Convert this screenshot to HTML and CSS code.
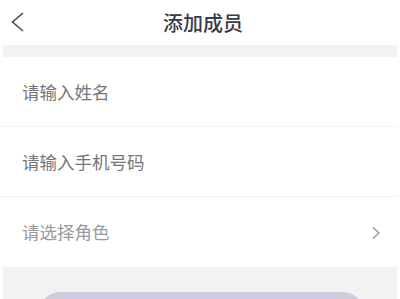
FILE: index.html
```html
<!DOCTYPE html>
<html lang="zh">
<head>
<meta charset="utf-8">
<link rel="stylesheet" href="styles.css">
</head>
<body>
<div class="page">
  <header class="header">
    <span class="back">
      <svg width="16" height="22" viewBox="0 0 16 22"><path d="M14 2 L3.5 11 L14 20" fill="none" stroke="#4a4a55" stroke-width="1.6"/></svg>
    </span>
    <h1 class="title">添加成员</h1>
  </header>
  <div class="gap-band"></div>
  <div class="form">
    <div class="row"><span class="ph">请输入姓名</span></div>
    <div class="row"><span class="ph">请输入手机号码</span></div>
    <div class="row"><span class="ph light">请选择角色</span>
      <svg class="chev" width="10" height="14" viewBox="0 0 10 14"><path d="M2 1.5 L8 7 L2 12.5" fill="none" stroke="#9a9a9f" stroke-width="1.4"/></svg>
    </div>
  </div>
  <div class="bottom">
    <div class="btn"></div>
  </div>
</div>
</body>
</html>
```
FILE: styles.css
```css
* { box-sizing: border-box; }
html, body { margin: 0; padding: 0; background: #fff; }
body { font-family: "Noto Sans CJK SC", "Noto Sans", sans-serif; overflow: hidden; }
.page { width: 400px; height: 299px; overflow: hidden; }
.header { position: relative; height: 45px; display: flex; align-items: center; justify-content: center; }
.back { position: absolute; left: 9px; top: 11px; display: flex; }
.title { margin: 0 0 0 6px; font-size: 20px; font-weight: 500; color: #3b3b49; line-height: 1; }
.gap-band { height: 12px; margin: 0 3px; background: #f2f2f2; }
.form { margin-right: 2px; }
.row { height: 70px; display: flex; align-items: center; justify-content: space-between; padding: 0 17px 0 22px; border-bottom: 1px solid #f3f3f3; }
.row:last-child { border-bottom: none; height: 70px; }
.ph { font-size: 17.5px; color: #76767a; line-height: 1; }
.ph.light { color: #9a9a9e; }
.chev { margin-top: 1px; }
.bottom { margin: 0 3px; background: #f2f2f2; height: 40px; padding: 25px 34px 0 37px; }
.btn { height: 40px; background: #cdcbdc; border-radius: 22px; }
```
